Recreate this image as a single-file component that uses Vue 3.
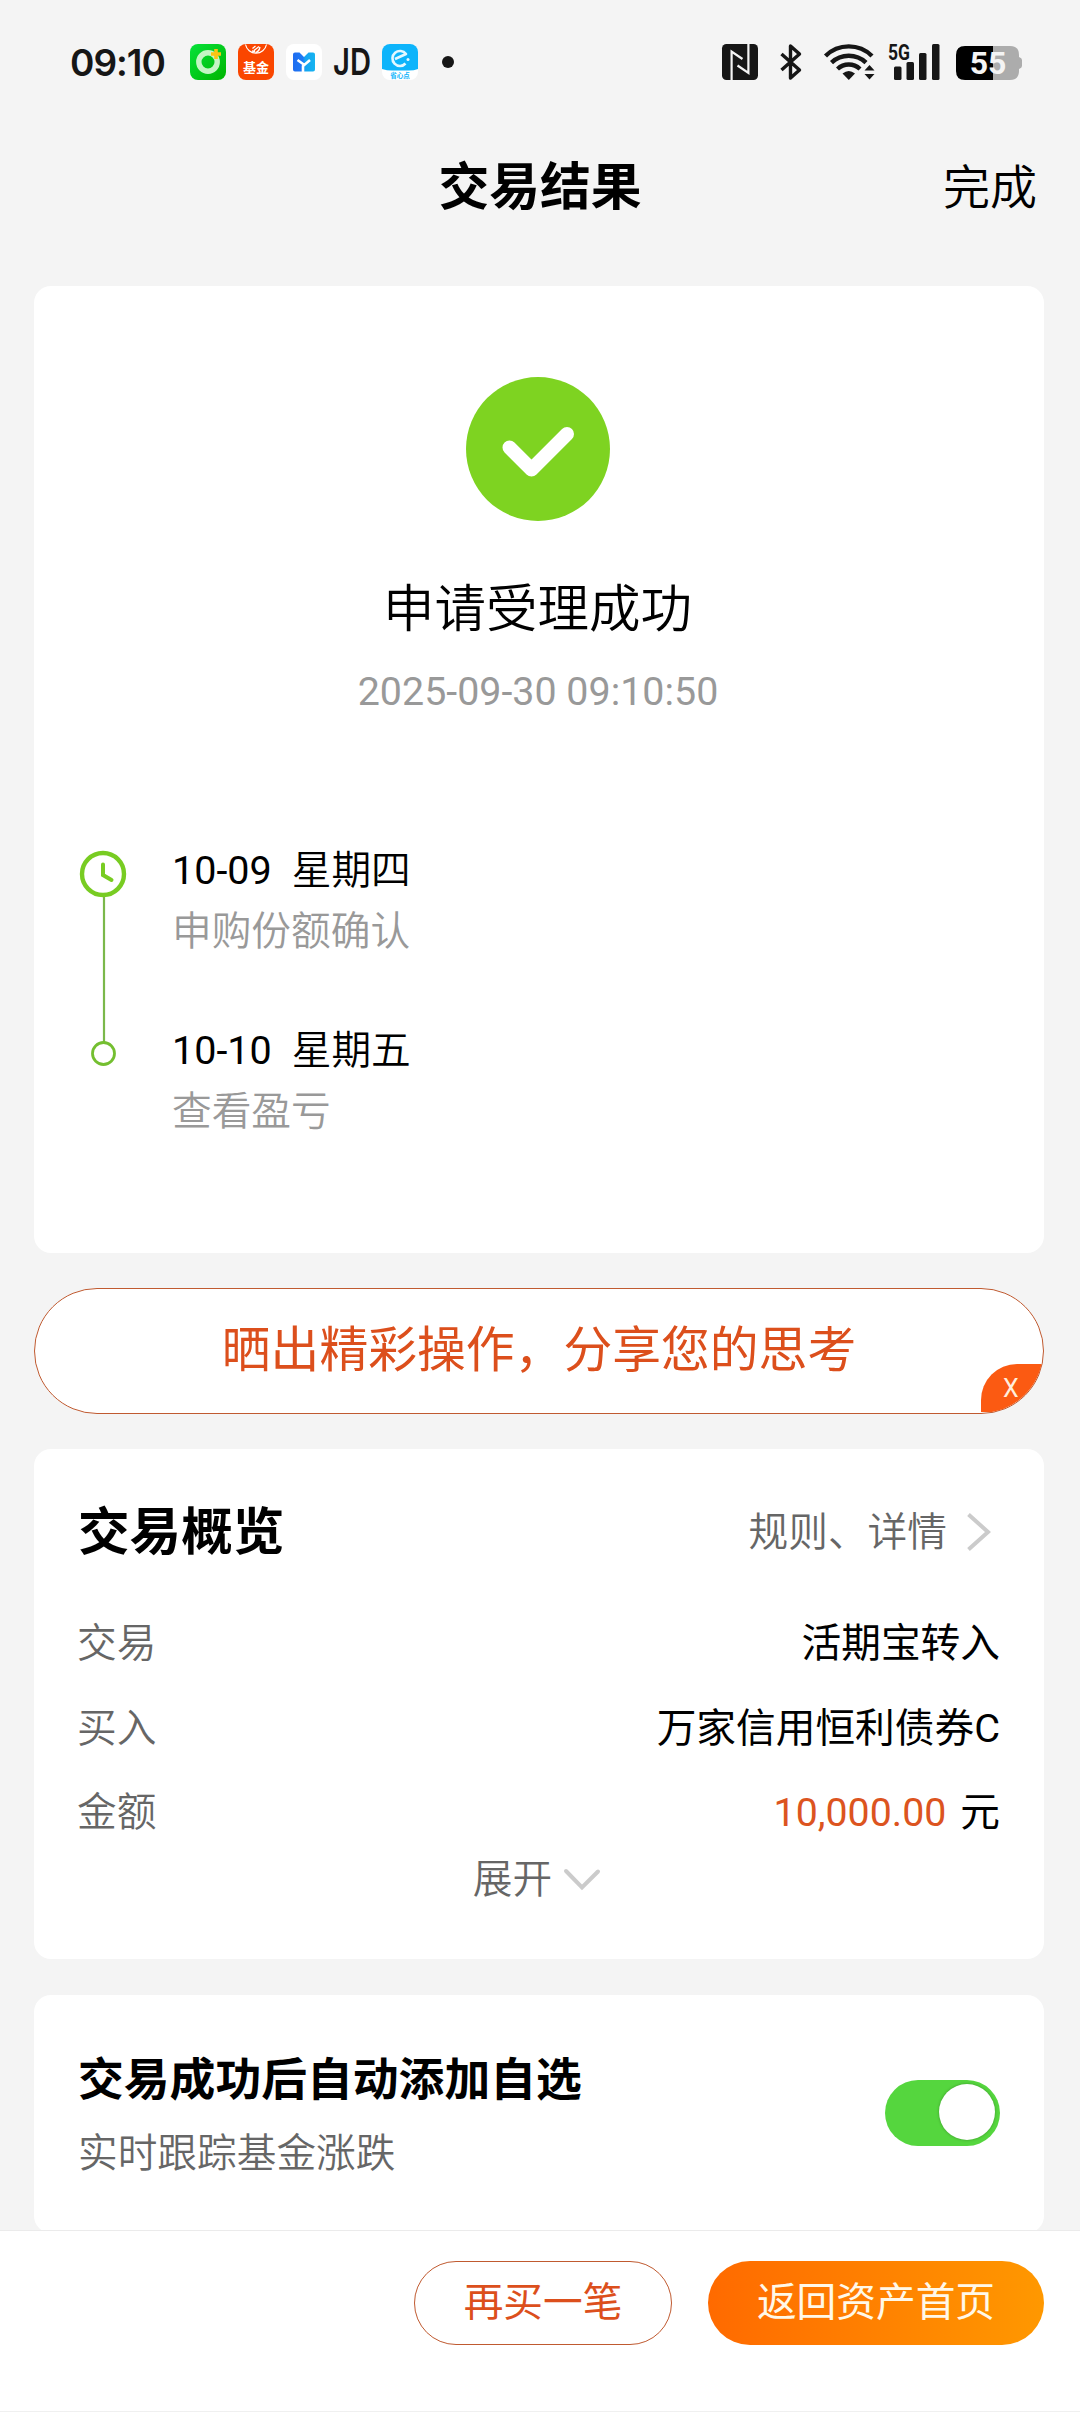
<template>
  <div class="page">
    <div class="status-bar">
      <div class="time">09:10</div>
      <div class="notice-icons">
        <svg class="app-icon" viewBox="0 0 36 36">
          <defs>
            <linearGradient id="greenBg" x1="0" y1="0" x2="1" y2="1">
              <stop offset="0" stop-color="#06e23a" />
              <stop offset="1" stop-color="#00b400" />
            </linearGradient>
          </defs>
          <rect width="36" height="36" rx="8" fill="url(#greenBg)" />
          <circle cx="18" cy="18" r="9.2" fill="none" stroke="#c4f5c4" stroke-width="5.4" />
          <path d="M26 5v10M21 10h10" stroke="#fbc412" stroke-width="3.6" />
        </svg>
        <svg class="app-icon" viewBox="0 0 36 36">
          <rect width="36" height="36" rx="8" fill="#fa4600" />
          <path d="M7.5 0.5a10.7 10.7 0 0 0 21 0" fill="none" stroke="#fff" stroke-width="1.2" />
          <path d="M14.5 4.5l3-2.5M16 6.5l5-4M17.5 8.5c2-.5 4-3 4.5-5.5M14 7l3 .5" fill="none" stroke="#fff" stroke-width="1.3" />
          <text class="fund-text" x="18" y="28.3" text-anchor="middle">基金</text>
        </svg>
        <svg class="app-icon" viewBox="0 0 36 36">
          <defs>
            <linearGradient id="blueM" x1="0" y1="0" x2="1" y2="0">
              <stop offset="0" stop-color="#1f6cf0" />
              <stop offset="0.45" stop-color="#1d7af5" />
              <stop offset="0.55" stop-color="#14a4f2" />
              <stop offset="1" stop-color="#16b4f0" />
            </linearGradient>
          </defs>
          <rect width="36" height="36" rx="8" fill="#fff" />
          <path d="M9 8.5h4.5l4.5 4.5 4.5-4.5H27q2 0 2 2v15q0 2-2 2H9q-2 0-2-2v-15q0-2 2-2z" fill="url(#blueM)" />
          <path d="M11.5 16l7 5M24 16l-7 6v6" fill="none" stroke="#fff" stroke-width="2.6" />
        </svg>
        <svg class="app-icon" viewBox="0 0 36 36">
          <text class="jd-text" x="-1" y="31.2" textLength="38" lengthAdjust="spacingAndGlyphs">JD</text>
        </svg>
        <svg class="app-icon" viewBox="0 0 36 36">
          <defs>
            <clipPath id="eClip"><rect width="36" height="36" rx="8" /></clipPath>
          </defs>
          <g clip-path="url(#eClip)">
            <rect width="36" height="36" fill="#fff" />
            <path d="M0 0h36v25q-5 2-12 1.5h-14q-5 0-10-1.5z" fill="#0db4fb" />
          </g>
          <path d="M13 15l11-5a7.5 7.5 0 1 0-.5 9.5" fill="none" stroke="#e4f8ff" stroke-width="2.6" stroke-linejoin="round" />
          <circle cx="26" cy="15.5" r="1.5" fill="#e4f8ff" />
          <text class="e-text" x="18" y="33.8" text-anchor="middle">省心点</text>
        </svg>
      </div>
      <div class="dot"></div>

      <div class="system-icons">
        <svg class="nfc" viewBox="0 0 36 36">
          <rect width="36" height="36" rx="4.5" fill="#161616" />
          <path d="M9.6 36V7.5L20.5 15M26.4 0v29L15.5 21.5" fill="none" stroke="#f4f4f4" stroke-width="2.2" />
        </svg>
        <svg class="bluetooth" viewBox="0 0 22 36">
          <path d="M1.5 10l18 16-9 8V2l9 8-18 16" fill="none" stroke="#161616" stroke-width="3.4" stroke-linejoin="round" />
        </svg>
        <svg class="wifi" viewBox="0 0 52 36">
          <g fill="none" stroke="#161616" stroke-width="4.4">
            <path d="M1.5 12a33 33 0 0 1 46.5 0" />
            <path d="M7.5 18.7a25 25 0 0 1 34.5 0" />
            <path d="M13.5 25a16.5 16.5 0 0 1 22.5 0" />
          </g>
          <path d="M18.5 29.5q6.2-5 12.5 0L24.8 36z" fill="#161616" />
          <path d="M40.5 26.5l5-5.5 5 5.5zM40.5 30l5 5.5 5-5.5z" fill="#161616" />
        </svg>
        <svg class="signal" viewBox="0 0 52 38">
          <text class="net-text" x="0" y="17.5" textLength="22" lengthAdjust="spacingAndGlyphs">5G</text>
          <g fill="#161616">
            <rect x="6" y="24.5" width="7.5" height="13.5" rx="1.5" />
            <rect x="18.5" y="20" width="7.5" height="18" rx="1.5" />
            <rect x="31" y="11" width="7.5" height="27" rx="1.5" />
            <rect x="44" y="2" width="7.5" height="36" rx="1.5" />
          </g>
        </svg>
        <svg class="battery" viewBox="0 0 66 34">
          <path d="M37 0h17q9 0 9 9v2q3 1 3 3v6q0 2-3 3v2q0 9-9 9H37z" fill="#acacac" />
          <path d="M9 0h28v34H9q-9 0-9-9V9q0-9 9-9z" fill="#000" />
          <text class="battery-text" x="32" y="27.8" text-anchor="middle">55</text>
        </svg>
      </div>
    </div>

    <div class="nav-bar">
      <div class="nav-side"></div>
      <div class="nav-title">交易结果</div>
      <div class="nav-side nav-done">完成</div>
    </div>

    <div class="content">
      <div class="card result-card">
        <svg class="success-icon" viewBox="0 0 144 144">
          <circle cx="72" cy="72" r="72" fill="#7ed321" />
          <path d="M43.5 70.5l22 22L101 57" fill="none" stroke="#fff" stroke-width="14" stroke-linecap="round" stroke-linejoin="round" />
        </svg>
        <div class="result-title">申请受理成功</div>
        <div class="result-time">2025-09-30 09:10:50</div>

        <div class="timeline">
          <svg class="timeline-line" viewBox="0 0 48 220">
            <path d="M25 47v146" stroke="#7bb84a" stroke-width="2.2" />
            <circle cx="24" cy="25" r="21" fill="#fff" stroke="#78cc22" stroke-width="4.4" />
            <path d="M24 15.5V26l8.5 5" fill="none" stroke="#78cc22" stroke-width="4" stroke-linecap="round" />
            <circle cx="24.5" cy="204.5" r="11" fill="#fff" stroke="#74bf30" stroke-width="2.8" />
          </svg>
          <div class="steps">
            <div v-for="step in steps" :key="step.date" class="step">
              <div class="step-date"><span class="num">{{ step.date }}</span><span>{{ step.week }}</span></div>
              <div class="step-text">{{ step.text }}</div>
            </div>
          </div>
        </div>
      </div>

      <div v-if="showShare" class="share">
        晒出精彩操作，分享您的思考
        <div class="share-close" @click="showShare = false">X</div>
      </div>

      <div class="card overview-card">
        <div class="overview-head">
          <div class="overview-title">交易概览</div>
          <div class="overview-link">
            规则、详情
            <svg class="arrow-right" viewBox="0 0 24 38">
              <path d="M1.5 1.5L21 19 1.5 36.5" fill="none" stroke="#cbcbcb" stroke-width="4" />
            </svg>
          </div>
        </div>
        <div class="rows">
          <div v-for="row in rows" :key="row.label" class="row">
            <div class="label">{{ row.label }}</div>
            <div v-if="row.unit" class="value"><span class="amount">{{ row.value }}</span><span>{{ row.unit }}</span></div>
            <div v-else class="value">{{ row.value }}</div>
          </div>
        </div>
        <div class="expand">
          展开
          <svg class="arrow-down" viewBox="0 0 36 22">
            <path d="M2 2l16 16.5L34 2.5" fill="none" stroke="#cbcbcb" stroke-width="4" stroke-linecap="round" />
          </svg>
        </div>
      </div>

      <div class="card auto-card">
        <div>
          <div class="auto-title">交易成功后自动添加自选</div>
          <div class="auto-text">实时跟踪基金涨跌</div>
        </div>
        <div class="switch" :class="{ on: autoAdd }" @click="autoAdd = !autoAdd">
          <div class="knob"></div>
        </div>
      </div>
    </div>

    <div class="footer">
      <button class="btn btn-again">再买一笔</button>
      <button class="btn btn-home">返回资产首页</button>
    </div>
  </div>
</template>

<script setup>
import { ref } from 'vue'

// State
const showShare = ref(true)
const autoAdd = ref(true)

const steps = [
  { date: '10-09', week: '星期四', text: '申购份额确认' },
  { date: '10-10', week: '星期五', text: '查看盈亏' }
]

const rows = [
  { label: '交易', value: '活期宝转入' },
  { label: '买入', value: '万家信用恒利债券C' },
  { label: '金额', value: '10,000.00', unit: '元' }
]
</script>

<style>
body {
  margin: 0;
  background: #f4f4f4;
}
</style>

<style scoped>
.page {
  display: flex;
  flex-direction: column;
  width: 1080px;
  height: 2412px;
  overflow: hidden;
  background: #f4f4f4;
  color: #000;
  font-family: Roboto, "Noto Sans CJK SC", sans-serif;
  font-size: 39.7px;
  font-weight: 350;
}

svg {
  display: block;
  flex-shrink: 0;
  overflow: visible;
}

/* --- Status bar --- */
.status-bar {
  display: flex;
  align-items: center;
  height: 124px;
  box-sizing: border-box;
  padding: 0 58px 0 70px;
  color: #161616;
  flex-shrink: 0;
}

.time {
  width: 120px;
  font-family: Inter, sans-serif;
  font-size: 37px;
  font-weight: 600;
  letter-spacing: -1px;
}

.notice-icons {
  display: flex;
  align-items: center;
  gap: 12px;
}

.app-icon {
  width: 36px;
  height: 36px;
}

.jd-text { font-family: Inter, sans-serif; font-size: 37px; font-weight: 600; fill: #161616; }
.fund-text { font-size: 13px; font-weight: 700; fill: #fff; }
.e-text { font-size: 6.5px; font-weight: 700; fill: #0db4fb; }
.net-text { font-size: 22px; font-weight: 700; fill: #161616; }
.battery-text { font-family: Roboto, sans-serif; font-size: 32px; font-weight: 700; fill: #f4f4f4; }

.dot {
  width: 12px;
  height: 12px;
  margin-left: 24px;
  border-radius: 50%;
  background: #161616;
}

.system-icons {
  display: flex;
  align-items: center;
  margin-left: auto;
}

.nfc { width: 36px; height: 36px; }
.bluetooth { width: 22px; height: 36px; margin-left: 22px; }
.wifi { width: 52px; height: 36px; margin-left: 22px; }
.signal { width: 52px; height: 38px; margin: -2px 0 0 12px; }
.battery { width: 66px; height: 34px; margin: 2px 0 0 16px; }

/* --- Nav --- */
.nav-bar {
  display: flex;
  align-items: center;
  justify-content: space-between;
  height: 128px;
  box-sizing: border-box;
  padding: 0 43px;
  line-height: 64px;
  flex-shrink: 0;
}

.nav-title {
  font-size: 50.8px;
  font-weight: 700;
}

.nav-side {
  width: 120px;
}

.nav-done {
  font-size: 47px;
  text-align: right;
}

/* --- Cards --- */
.content {
  flex: 1;
  min-height: 0;
  overflow: hidden;
  padding: 34px 36px 0 34px;
}

.card {
  box-sizing: border-box;
  border-radius: 17px;
  background: #fff;
}

.result-card {
  height: 967px;
  padding-top: 91px;
}

.success-icon {
  width: 144px;
  height: 144px;
  margin: 0 0 0 432px;
}

.result-title {
  margin-top: 53px;
  padding-right: 3px;
  font-size: 51.5px;
  line-height: 72px;
  text-align: center;
}

.result-time {
  margin-top: 16px;
  padding-right: 2px;
  font-size: 39.4px;
  font-weight: 400;
  line-height: 60px;
  text-align: center;
  color: #999;
}

.timeline {
  display: flex;
  margin-top: 119px;
  padding-left: 45px;
}

.timeline-line {
  width: 48px;
  height: 220px;
  margin-top: 8px;
}

.steps {
  margin-left: 45px;
}

.step {
  height: 180px;
  line-height: 60px;
}

.step-date {
  display: flex;
  gap: 20px;
}

.num {
  font-size: 39.5px;
  font-weight: 400;
}

.step-text {
  padding-top: 1px;
  color: #999;
}

/* --- Share banner --- */
.share {
  position: relative;
  display: flex;
  align-items: center;
  justify-content: center;
  height: 126px;
  box-sizing: border-box;
  margin: 35px 0;
  border: 1.5px solid #c05a30;
  border-radius: 63px;
  overflow: hidden;
  background: #fff;
  color: #dc4f1c;
  font-size: 48.8px;
  font-weight: 400;
  line-height: 60px;
}

.share-close {
  position: absolute;
  right: 0;
  bottom: 1px;
  width: 62px;
  height: 48px;
  padding-left: 22px;
  box-sizing: border-box;
  border-top-left-radius: 36px;
  background: #fb5a12;
  color: #ffeedd;
  font-size: 25px;
  line-height: 49px;
}

/* --- Overview --- */
.overview-card {
  height: 510px;
  padding: 42px 44px 0;
}

.overview-head {
  display: flex;
  align-items: center;
  justify-content: space-between;
  height: 84px;
  line-height: 60px;
}

.overview-title {
  font-size: 51.6px;
  font-weight: 700;
}

.overview-link {
  display: flex;
  align-items: center;
  gap: 20px;
  padding-right: 9px;
  color: #666;
}

.arrow-right { width: 24px; height: 38px; margin-top: -3px; }
.arrow-down { width: 36px; height: 22px; }

.rows {
  margin-top: 27px;
}

.row {
  display: flex;
  justify-content: space-between;
  line-height: 84.6px;
}

.label {
  margin-left: -1px;
  color: #666;
}

.value {
  font-weight: 400;
}

.amount {
  margin-right: 14px;
  color: #dc5420;
  font-size: 39.3px;
}

.expand {
  display: flex;
  align-items: center;
  justify-content: center;
  gap: 12px;
  margin-top: -1px;
  padding-right: 5px;
  line-height: 50px;
  color: #666;
}

/* --- Auto add --- */
.auto-card {
  display: flex;
  justify-content: space-between;
  height: 238px;
  margin-top: 36px;
  padding: 56px 44px 0;
}

.auto-title {
  font-size: 45.8px;
  font-weight: 700;
  line-height: 60px;
}

.auto-text {
  margin-top: 13px;
  line-height: 60px;
  color: #666;
}

.switch {
  display: flex;
  align-items: center;
  width: 115px;
  height: 66px;
  box-sizing: border-box;
  margin-top: 29px;
  padding: 0 5px 2px;
  border-radius: 33px;
  background: #ccc;
}

.switch.on {
  justify-content: flex-end;
  background: #55d63e;
}

.knob {
  width: 56px;
  height: 56px;
  border-radius: 50%;
  background: #fff;
  box-shadow: 0 0 3px rgba(0, 0, 0, 0.3);
}

/* --- Footer --- */
.footer {
  display: flex;
  justify-content: flex-end;
  gap: 36px;
  height: 182px;
  box-sizing: border-box;
  padding: 30px 36px 0;
  border-top: 1px solid #ebebeb;
  border-bottom: 1px solid #f0f0f0;
  background: #fff;
  flex-shrink: 0;
}

.btn {
  height: 84px;
  box-sizing: border-box;
  padding: 0;
  border: none;
  border-radius: 42px;
  font-family: inherit;
  font-size: 39.7px;
  font-weight: 400;
  line-height: 60px;
}

.btn-again {
  width: 258px;
  border: 1.5px solid #c05a30;
  background: #fff;
  color: #dc4f1c;
}

.btn-home {
  width: 336px;
  background: linear-gradient(90deg, #ff6a00, #ff9800);
  color: #fff8e8;
}
</style>
